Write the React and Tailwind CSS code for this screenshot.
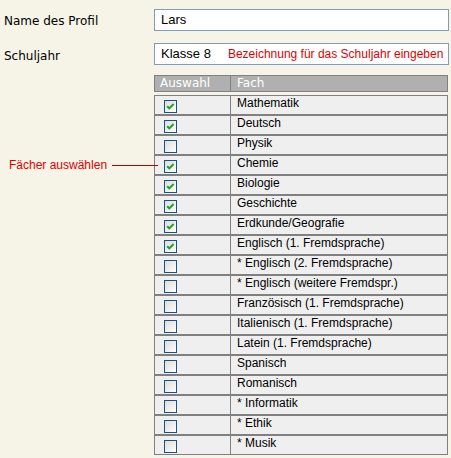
import React from "react";

const subjects = [
  ["Mathematik", true],
  ["Deutsch", true],
  ["Physik", false],
  ["Chemie", true],
  ["Biologie", true],
  ["Geschichte", true],
  ["Erdkunde/Geografie", true],
  ["Englisch (1. Fremdsprache)", true],
  ["* Englisch (2. Fremdsprache)", false],
  ["* Englisch (weitere Fremdspr.)", false],
  ["Französisch (1. Fremdsprache)", false],
  ["Italienisch (1. Fremdsprache)", false],
  ["Latein (1. Fremdsprache)", false],
  ["Spanisch", false],
  ["Romanisch", false],
  ["* Informatik", false],
  ["* Ethik", false],
  ["* Musik", false],
];

function Box({ checked }) {
  return (
    <div className="w-[13px] h-[13px] border border-[#1c5180] bg-gradient-to-br from-[#dcdcd7] to-[#ffffff] flex items-center justify-center">
      {checked && (
        <svg width="11" height="11" viewBox="0 0 11 11">
          <path d="M2.2 5.2 L4.3 7.4 L8.6 3" fill="none" stroke="#21a121" strokeWidth="2" />
        </svg>
      )}
    </div>
  );
}

export default function App() {
  return (
    <div className="w-[451px] h-[458px] bg-[#f6f3e7] relative overflow-hidden">
      <div className="pt-[9px]">
        <div className="flex items-center h-[22px]">
          <div className="w-[154px] pl-[4px] text-[12px] text-black font-['DejaVu_Sans',sans-serif] pt-[1px]">Name des Profil</div>
          <div className="w-[295px] h-[22px] bg-white border border-[#7f9db9] flex items-center pl-[6px] text-[13px] text-black font-['Liberation_Sans',Arial,sans-serif]">
            Lars
          </div>
        </div>
        <div className="flex items-center h-[22px] mt-[12px]">
          <div className="w-[154px] pl-[4px] text-[12px] text-black font-['DejaVu_Sans',sans-serif] pt-[3px]">Schuljahr</div>
          <div className="w-[295px] h-[22px] bg-white border border-[#7f9db9] flex items-center pl-[6px] font-['Liberation_Sans',Arial,sans-serif]">
            <span className="text-[13px] text-black">Klasse 8</span>
            <span className="text-[12px] text-[#e00000] ml-[17px] whitespace-nowrap">Bezeichnung für das Schuljahr eingeben</span>
          </div>
        </div>
        <div className="flex mt-[10px]">
          <div className="w-[154px] relative">
            <div className="absolute left-[9px] top-[81px] flex items-center whitespace-nowrap font-['Liberation_Sans',Arial,sans-serif] text-[12px] text-[#e00000]">
              <span>Fächer auswählen</span>
              <span className="ml-[5px] w-[46px] h-px bg-[#c00000] inline-block" />
            </div>
          </div>
          <div className="w-[294px]">
            <div className="flex h-[17px] bg-[#b0b0b0] border border-[#808080] text-white text-[12px] font-['DejaVu_Sans',sans-serif] leading-[15px]">
              <div className="w-[75px] pl-[5px]">Auswahl</div>
              <div className="border-l border-[#808080] pl-[6px] flex-1">Fach</div>
            </div>
            <div className="mt-[3px] flex flex-col">
              {subjects.map(([name, checked]) => (
                <div key={name} className="flex h-[20px] bg-[#efefef] border border-[#808080]">
                  <div className="w-[75px] pl-[9px] pt-[4px]">
                    <Box checked={checked} />
                  </div>
                  <div className="flex-1 border-l border-[#808080] pl-[6px] text-[12px] leading-[15px] text-black font-['Liberation_Sans',Arial,sans-serif]">
                    {name}
                  </div>
                </div>
              ))}
            </div>
          </div>
        </div>
      </div>
    </div>
  );
}
